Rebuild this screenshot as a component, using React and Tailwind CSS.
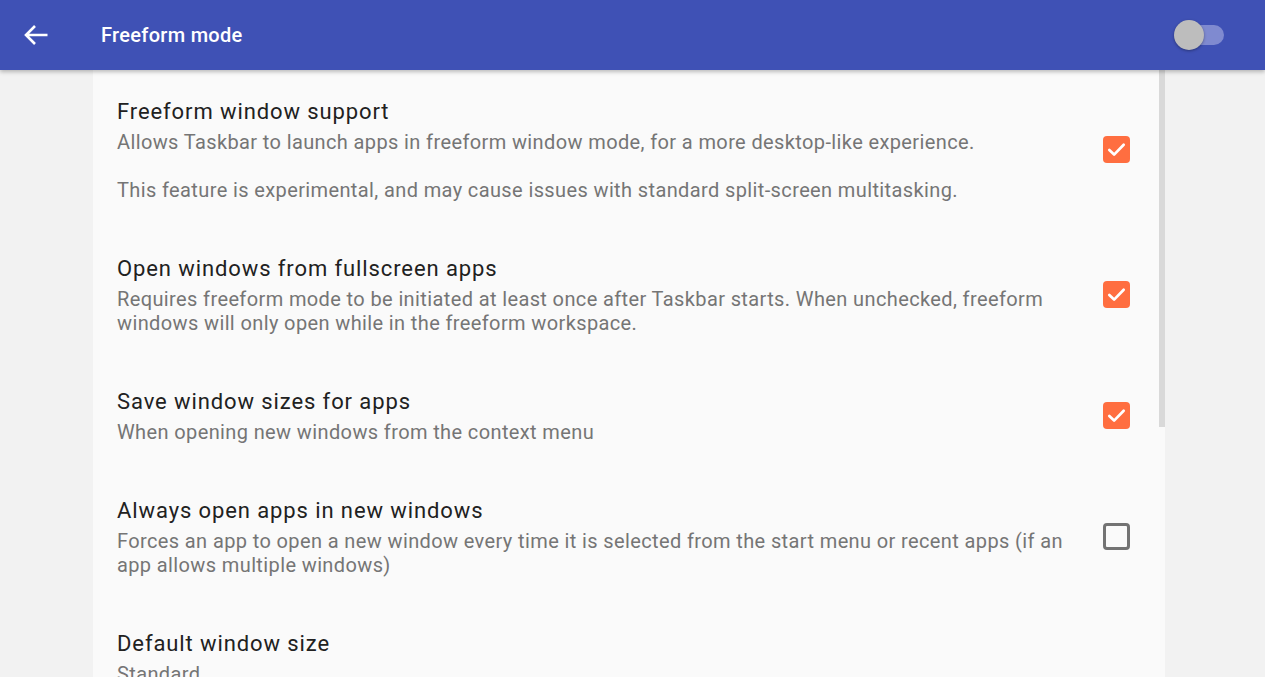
import React from 'react';

const prefs = [
  {
    title: 'Freeform window support',
    summary: [
      'Allows Taskbar to launch apps in freeform window mode, for a more desktop-like experience.',
      '',
      'This feature is experimental, and may cause issues with standard split-screen multitasking.',
    ],
    checked: true,
  },
  {
    title: 'Open windows from fullscreen apps',
    summary: [
      'Requires freeform mode to be initiated at least once after Taskbar starts. When unchecked, freeform windows will only open while in the freeform workspace.',
    ],
    checked: true,
  },
  {
    title: 'Save window sizes for apps',
    summary: ['When opening new windows from the context menu'],
    checked: true,
  },
  {
    title: 'Always open apps in new windows',
    summary: [
      'Forces an app to open a new window every time it is selected from the start menu or recent apps (if an app allows multiple windows)',
    ],
    checked: false,
  },
  {
    title: 'Default window size',
    summary: ['Standard'],
  },
];

function Checkbox({ checked }) {
  if (checked) {
    return (
      <div className="w-[27px] h-[27px] rounded-[4px] bg-[#ff6e40] flex items-center justify-center">
        <svg width="23" height="23" viewBox="0 0 24 24" fill="none">
          <path d="M4.5 12.5l5 4.8L19.5 7" stroke="#fff" strokeWidth="2.8" strokeLinecap="round" strokeLinejoin="round" />
        </svg>
      </div>
    );
  }
  return <div className="w-[27px] h-[27px] rounded-[4px] border-[3px] border-[#737373]" />;
}

function PrefRow({ pref }) {
  return (
    <div className="flex items-center pl-6 pt-[28px] pb-[25px]">
      <div className="w-[958px]">
        <div className="text-[22px] leading-[28px] tracking-[0.9px] text-[#212121]">{pref.title}</div>
        <div className="mt-[4px] text-[20px] leading-[24px] tracking-[0.38px] text-[#757575]">
          {pref.summary.map((line, i) => (
            <p key={i} className="min-h-[24px]">{line}</p>
          ))}
        </div>
      </div>
      {pref.checked !== undefined && (
        <div className="ml-[28px] -mt-[2px]">
          <Checkbox checked={pref.checked} />
        </div>
      )}
    </div>
  );
}

export default function App() {
  return (
    <div className="w-[1265px] h-[677px] overflow-hidden bg-[#f2f2f2] flex flex-col" style={{ fontFamily: 'Roboto, "Noto Sans", sans-serif' }}>
      {/* app bar */}
      <div className="relative z-10 h-[70px] shrink-0 bg-[#3f51b5] flex items-center shadow-[0_2px_4px_rgba(0,0,0,0.25)]">
        <div className="w-[101px] flex justify-center pr-[29px]">
          <svg width="26" height="22" viewBox="0 0 26 22" fill="none">
            <path d="M24.5 11H3M12 2L3 11l9 9" stroke="#fff" strokeWidth="2.6" strokeLinejoin="miter" />
          </svg>
        </div>
        <div className="text-[20px] font-medium tracking-[0.3px] text-white">Freeform mode</div>
        <div className="ml-auto mr-[41px] relative w-[50px] h-[30px] flex items-center">
          <div className="absolute left-[10px] right-0 h-[20px] rounded-full bg-[#7f8ad0]" />
          <div className="absolute left-0 w-[30px] h-[30px] rounded-full bg-[#bdbdbd] shadow-[0_1px_3px_rgba(0,0,0,0.35)]" />
        </div>
      </div>

      {/* list */}
      <div className="flex-1 flex">
        <div className="ml-[93px] w-[1072px] bg-[#fafafa] relative">
          {prefs.map((p) => (
            <PrefRow key={p.title} pref={p} />
          ))}
          <div className="absolute right-0 top-0 w-[6px] h-[357px] bg-[#d9d9d9]" />
        </div>
      </div>
    </div>
  );
}
